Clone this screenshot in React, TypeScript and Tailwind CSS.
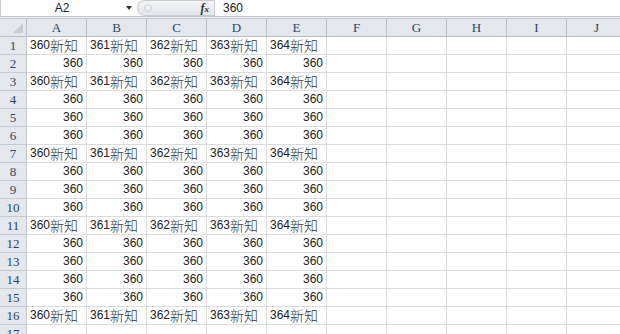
const cols = ['A', 'B', 'C', 'D', 'E', 'F', 'G', 'H', 'I', 'J']
const labelRows = [1, 3, 7, 11, 16]
const rows = Array.from({ length: 17 }, (_, i) => i + 1)

function Cell({ row, col }: { row: number; col: number }) {
  if (row === 17 || col > 4) {
    return <div className="border-r border-b border-[#dadcdd]" />
  }
  if (labelRows.includes(row)) {
    return (
      <div className="flex items-end pb-[1px] border-r border-b border-[#dadcdd] pl-[3px] text-[#222] whitespace-nowrap">
        <span className="text-[12px] leading-[15px] font-['Liberation_Sans',sans-serif]">{360 + col}</span>
        <span className="text-[14px] leading-[15px] text-[#333] font-['Noto_Sans_CJK_SC',sans-serif] font-light">新知</span>
      </div>
    )
  }
  return (
    <div className="flex items-end pb-[1px] justify-end border-r border-b border-[#dadcdd] pr-[3px] text-[12px] leading-[15px] text-[#222] font-['Liberation_Sans',sans-serif]">
      360
    </div>
  )
}

export default function App() {
  return (
    <div className="w-[620px] h-[334px] overflow-hidden bg-white">
      {/* formula bar */}
      <div className="flex h-[16px] items-center border-l border-[#c6c9ce] bg-white">
        <div className="relative flex w-[136px] items-center justify-center h-full">
          <span className="text-[12px] text-[#222] font-['Liberation_Sans',sans-serif] -ml-[14px]">A2</span>
          <span className="absolute left-[125px] top-[6px] h-0 w-0 border-x-[3px] border-t-[4px] border-x-transparent border-t-[#333]" />
        </div>
        <div className="flex h-full w-[77px] items-center justify-between rounded-l-full border border-r-0 border-[#c8ccd2] bg-gradient-to-b from-[#f3f4f6] to-[#e3e6ea] pl-[6px] pr-[5px]">
          <span className="h-[8px] w-[8px] rounded-full border border-[#d0d3d8]" />
          <span className="text-[12px] italic font-bold text-[#333] font-['Liberation_Serif',serif]">f<span className="text-[9px]">x</span></span>
        </div>
        <div className="flex h-full flex-1 items-center border-l border-[#c8ccd2] pl-[8px]">
          <span className="text-[12px] text-[#222] font-['Liberation_Sans',sans-serif]">360</span>
        </div>
      </div>
      <div className="h-[3px] border-t border-b border-[#c3c7cc] bg-[#eef0f2]" />

      {/* sheet grid */}
      <div className="grid grid-cols-[27px_repeat(10,60px)] auto-rows-[18px]">
        <div className="relative border-r border-b border-[#b9bec6] bg-[#e4e7eb]">
          <span className="absolute right-[3px] bottom-[3px] h-0 w-0 border-b-[10px] border-l-[10px] border-b-[#c9ccd1] border-l-transparent" />
        </div>
        {cols.map((c) => (
          <div
            key={c}
            className="flex items-center justify-center border-r border-b border-[#b9bec6] bg-[#e4e7eb] text-[13px] text-[#2f4563] font-['Liberation_Serif',serif]"
          >
            {c}
          </div>
        ))}
        {rows.map((r) => (
          <div key={r} className="contents">
            <div className="flex items-center justify-center border-r border-b border-[#c4c9d0] bg-[#e4e7eb] text-[13px] text-[#2f4563] font-['Liberation_Serif',serif]">
              {r}
            </div>
            {cols.map((c, ci) => (
              <Cell key={c} row={r} col={ci} />
            ))}
          </div>
        ))}
      </div>
    </div>
  )
}
